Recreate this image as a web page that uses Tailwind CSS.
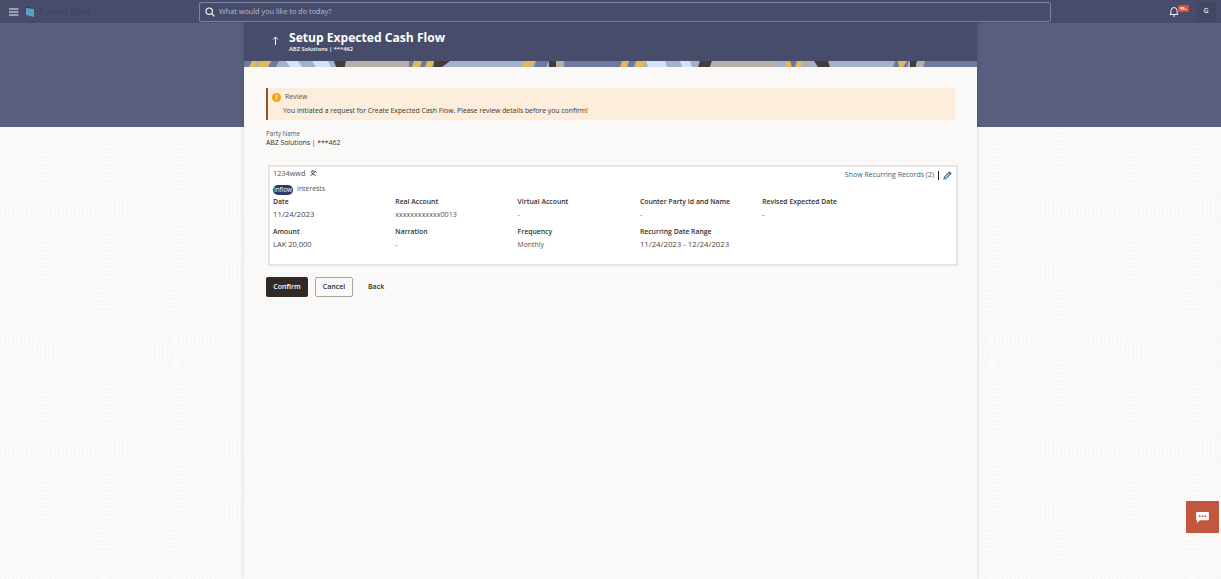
<!DOCTYPE html>
<html><head><meta charset="utf-8"><script src="https://cdn.jsdelivr.net/npm/@tailwindcss/browser@4"></script></head>
<body class="m-0 overflow-hidden">
<div class="relative w-[1221px] h-[579px] overflow-hidden bg-[#fbfaf8] font-['Open_Sans','Noto_Sans',sans-serif] text-[6.85px] text-[#2c2a28]">
  <svg class="absolute inset-0" width="1221" height="579" aria-hidden="true"><defs>
    <radialGradient id="rg" r="0.0286" spreadMethod="repeat">
      <stop offset="0" stop-color="#fbfaf8"/><stop offset=".5" stop-color="#fbfaf8"/><stop offset=".5" stop-color="#f8f7f5"/><stop offset="1" stop-color="#f8f7f5"/>
    </radialGradient>
    <pattern id="sw" x="-46" y="72" width="272" height="240" patternUnits="userSpaceOnUse">
      <g fill="url(#rg)">
        <circle cx="88" cy="140" r="70"/><circle cx="272" cy="140" r="70"/><circle cx="0" cy="140" r="70"/>
        <circle cx="20" cy="30" r="70"/><circle cx="292" cy="30" r="70"/><circle cx="20" cy="270" r="70"/><circle cx="292" cy="270" r="70"/>
        <circle cx="150" cy="40" r="70"/><circle cx="150" cy="280" r="70"/>
        <circle cx="220" cy="200" r="70"/><circle cx="-52" cy="200" r="70"/>
        <circle cx="156" cy="140" r="70"/><circle cx="224" cy="136" r="70"/><circle cx="-48" cy="136" r="70"/>
      </g></pattern></defs><rect width="1221" height="579" fill="url(#sw)"/></svg>
  <div class="absolute left-0 top-[23px] w-full h-[104px] bg-[#5a5f80]"></div>

  <header class="relative flex items-center h-[23px] bg-[#474c6b]">
    <svg class="ml-[9px]" width="10" height="8" viewBox="0 0 10 8"><path d="M0 1h9.5M0 4h9.5M0 7h9.5" stroke="#f2f2f6" stroke-width="1.2"/></svg>
    <svg class="ml-[6px]" width="10" height="11" viewBox="0 0 10 11"><path d="M1 0l8 2v1H1z" fill="#3a4060"/><path d="M1 2l8 1v8l-8-2z" fill="#5b9fc4"/></svg>
    <span class="ml-[4px] text-[9px] text-[#3c4160] w-[160px] tracking-[0.2px]">Futura Bank</span>
    <div class="flex items-center w-[852px] h-[20px] border border-[#7d82a0] rounded-[2px] bg-[#474c6b]">
      <svg class="ml-[5px]" width="10" height="10" viewBox="0 0 10 10" fill="none" stroke="#fff" stroke-width="1.1"><circle cx="4.2" cy="4.2" r="3.2"/><path d="M6.6 6.6L9.4 9.4"/></svg>
      <span class="ml-[4px] text-[7.3px] text-[#b5b8cb]">What would you like to do today?</span>
    </div>
    <div class="relative ml-[118px] w-[22px] h-[20px] flex items-center">
      <svg width="10" height="11" viewBox="0 0 10 11" fill="none" stroke="#eef" stroke-width="1"><path d="M1 8.5h8L8 7V4.5a3 3 0 00-6 0V7zM4 10h2"/></svg>
      <span class="absolute left-[9px] top-[3px] w-[11px] h-[7px] rounded-[1px] bg-[#c9553b] text-white text-[4px] leading-[7px] text-center font-bold">99+</span>
    </div>
    <div class="ml-[5px] w-[20px] h-[20px] rounded-[2px] bg-[#434763] text-[#e4e4ea] flex items-center justify-center font-semibold text-[7px]">G</div>
  </header>

  <main class="relative ml-[244px] w-[733px] h-[556px] shadow-[0_0_4px_rgba(0,0,0,0.15)]">
    <div class="flex h-[38px] bg-[#474c6b] text-white">
      <svg class="ml-[28px] mt-[13px]" width="7" height="9" viewBox="0 0 7 9" fill="none" stroke="#fff" stroke-width="1"><path d="M3.5 9V1M1 3.5L3.5 1 6 3.5"/></svg>
      <div class="ml-[10px] pt-[7px]">
        <h1 class="text-[12.1px] leading-[16px] font-bold">Setup Expected Cash Flow</h1>
        <p class="text-[5.8px] leading-[7px] font-semibold">ABZ Solutions | ***462</p>
      </div>
    </div>
    <svg class="block" width="733" height="6" viewBox="0 0 733 6">
      <rect width="733" height="6" fill="#a4b0cc"/>
      <path d="M0 0h8L5 6H0zM27 0h8l-3 6h-8zM165 0h30v6h-30zM292 0h13l-3 6h-12zM320 0h62l-4 6h-60zM385 0h7l-2 6h-7zM396 0h6l-2 6h-4zM546 0h10l-2 6h-8zM651 0h14l-2 6h-14zM681 0h52v6h-54z" fill="#6d79a0"/>
      <path d="M42 0h12l4 6H46zM68 0h16l3 6H72zM402 0h10l2 6h-10zM411 0h10l2 6h-10zM436 0h10l2 6h-10z" fill="#d3e2f5"/>
      <path d="M8 0h6l-3 6H5zM16 0h11l-3 6H13zM170 0h8l-2 6h-8zM183 0h7l-2 6h-7zM280 0h12l-6 6h-8zM378 0h7l-2 6h-7zM392 0h10l-2 6h-8zM541 0h5l2 6h-6zM553 0h6l-2 6h-6zM654 0h9l-4 6h-4z" fill="#e2b85f"/>
      <path d="M90 0h12l-1 6H92zM190 0h16l-8 6h-8zM305 0h7v6h-7zM456 0h12l-2 6h-12zM570 0h14l2 6h-12zM666 0h7l-1 6h-6z" fill="#463b3a"/>
      <path d="M102 0h63v6H101zM312 0h8v6h-8zM468 0h63v6H466zM561 0h7l-2 6h-7zM673 0h8l-2 6h-7z" fill="#b5b0a8"/>
    </svg>
    <div class="h-[512px] bg-[#faf9f7] px-[22px] pt-[21px]">
      <div class="flex flex-col h-[32px] border-l-[2px] border-[#96561d] bg-[#fdeddc] pl-[4px]">
        <div class="flex items-center h-[19px]">
          <span class="flex items-center justify-center w-[9px] h-[9px] rounded-full bg-[#f5a60f] text-white text-[7px] font-bold leading-none">!</span>
          <span class="ml-[4px] text-[#5f5345]">Review</span>
        </div>
        <p class="ml-[11px] -mt-[1px] text-[#3c362e] leading-[9px]">You initiated a request for Create Expected Cash Flow. Please review details before you confirm!</p>
      </div>
      <div class="mt-[10px] text-[6.2px] leading-[8px] text-[#5b5750]">Party Name</div>
      <div class="text-[6.85px] leading-[9px] text-[#2f2d2a] -mt-[0.5px]">ABZ Solutions | ***462</div>

      <section class="relative ml-[2px] mt-[18.5px] w-[690px] h-[101px] bg-white border-[2px] border-[#e5e5e3] pl-[3px]">
        <div class="flex items-center h-[13px] text-[7.3px] text-[#55514c]"><span>1234wwd</span>
          <svg class="ml-[5px]" width="7" height="7" viewBox="0 0 7 7" fill="none" stroke="#555" stroke-width="1"><circle cx="3" cy="2" r="1.4"/><path d="M.5 6c.5-2 4.5-2 5.5 0M5 1l1.5 1.5"/></svg>
        </div>
        <div class="flex items-center h-[11px] mt-[4px]"><span class="w-[20px] text-center h-[10px] leading-[10px] rounded-full bg-[#2b3a6b] text-white text-[6.3px]">Inflow</span><span class="ml-[4px] text-[#55514c] text-[6.85px]">Interests</span></div>
        <div class="grid grid-cols-[122.3px_122.3px_122.3px_122.3px_122px] mt-[2px]">
          <div><div class="h-[11px] font-semibold text-[#33302c]">Date</div><div class="h-[13px] leading-[13px] text-[7.8px] text-[#48443f]">11/24/2023</div></div>
          <div><div class="h-[11px] font-semibold text-[#33302c]">Real Account</div><div class="h-[13px] leading-[13px] text-[7.2px] text-[#55514c]">xxxxxxxxxxxx0013</div></div>
          <div><div class="h-[11px] font-semibold text-[#33302c]">Virtual Account</div><div class="h-[13px] leading-[13px] text-[#55514c]">-</div></div>
          <div><div class="h-[11px] font-semibold text-[#33302c]">Counter Party Id and Name</div><div class="h-[13px] leading-[13px] text-[#55514c]">-</div></div>
          <div><div class="h-[11px] font-semibold text-[#33302c]">Revised Expected Date</div><div class="h-[13px] leading-[13px] text-[#55514c]">-</div></div>
        </div>
        <div class="grid grid-cols-[122.3px_122.3px_122.3px_122.3px_122px] mt-[5.5px]">
          <div><div class="h-[11px] font-semibold text-[#33302c]">Amount</div><div class="h-[13px] leading-[13px] text-[7.5px] text-[#48443f]">LAK 20,000</div></div>
          <div><div class="h-[11px] font-semibold text-[#33302c]">Narration</div><div class="h-[13px] leading-[13px] text-[#55514c]">-</div></div>
          <div><div class="h-[11px] font-semibold text-[#33302c]">Frequency</div><div class="h-[13px] leading-[13px] text-[#55514c]">Monthly</div></div>
          <div><div class="h-[11px] font-semibold text-[#33302c]">Recurring Date Range</div><div class="h-[13px] leading-[13px] text-[7.8px] text-[#48443f]">11/24/2023 - 12/24/2023</div></div>
        </div>
        <div class="absolute right-[4px] top-[3.5px] flex items-center h-[10px]">
          <span class="text-[#3f6077] text-[7px]">Show Recurring Records (2)</span>
          <span class="ml-[4px] w-[1px] h-[9px] bg-[#222]"></span>
          <svg class="ml-[4px]" width="9" height="9" viewBox="0 0 9 9" fill="none" stroke="#3f6f9a" stroke-width="1.1"><path d="M1 8l.5-2L6.5 1 8 2.5 3 7.5zM5.5 2L7 3.5"/></svg>
        </div>
      </section>

      <div class="flex items-center mt-[11px] font-semibold text-[7px]">
        <button class="w-[42px] h-[20px] rounded-[2px] bg-[#2f2a27] text-white font-semibold">Confirm</button>
        <button class="ml-[7px] w-[38px] h-[20px] rounded-[2px] border border-[#a8a5a0] text-[#2f2d2a] font-semibold">Cancel</button>
        <button class="ml-[15px] text-[#2f2d2a] font-semibold">Back</button>
      </div>
    </div>
  </main>

  <button class="absolute left-[1186px] top-[501px] w-[33px] h-[32px] bg-[#c3573d] flex items-center justify-center" aria-label="Chat">
    <svg width="13" height="11" viewBox="0 0 14 12"><path d="M1 0h12a1 1 0 011 1v7a1 1 0 01-1 1H4L1 12V9a1 1 0 01-1-1V1a1 1 0 011-1z" fill="#fff"/><circle cx="4" cy="4.5" r="1" fill="#c3573d"/><circle cx="7" cy="4.5" r="1" fill="#c3573d"/><circle cx="10" cy="4.5" r="1" fill="#c3573d"/></svg>
  </button>
</div>
</body></html>
